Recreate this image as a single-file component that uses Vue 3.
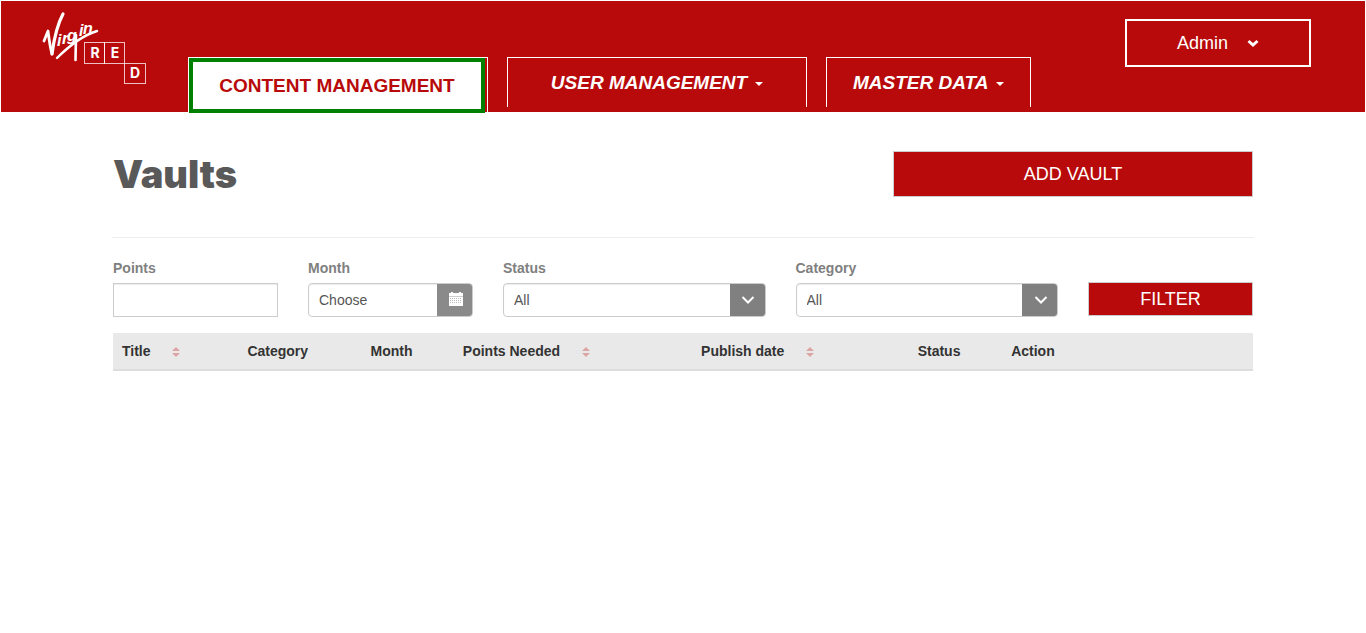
<script setup>
import { ref } from 'vue'

const points = ref('')
const month = ref('')
const status = ref('All')
const category = ref('All')

const columns = [
  { key: 'title', label: 'Title', sortable: true },
  { key: 'category', label: 'Category' },
  { key: 'month', label: 'Month' },
  { key: 'points', label: 'Points Needed', sortable: true },
  { key: 'publish', label: 'Publish date', sortable: true },
  { key: 'status', label: 'Status' },
  { key: 'action', label: 'Action' },
]
</script>

<template>
  <div class="page">
    <header class="header">
      <a class="brand" href="#" aria-label="Virgin Red">
        <svg class="logo" viewBox="0 0 106 76" width="106" height="76">
          <g fill="none" stroke="#fff" stroke-linecap="round" stroke-linejoin="round">
            <path d="M3 30L7 20C8 28 9 36 11 43" stroke-width="2.800" />
            <path d="M11 43C13 28 16 14 22 3" stroke-width="3.200" />
            <path d="M16 47C27 36 40 25 56 20" stroke-width="2.400" />
            <path d="M35 24L34.500 49" stroke-width="2.600" />
          </g>
          <text class="script" x="16 21 26 38 42" y="35 33 30 25 23">irgin</text>
          <g fill="none" stroke="#fff" stroke-opacity=".75">
            <rect x="43.500" y="31.500" width="20" height="21" />
            <rect x="63.500" y="31.500" width="20" height="21" />
            <rect x="83.500" y="52.500" width="21" height="20" />
          </g>
          <g class="caps">
            <text x="54" y="47">R</text>
            <text x="74" y="47">E</text>
            <text x="94" y="67">D</text>
          </g>
        </svg>
      </a>
      <nav class="tabs">
        <div class="tab tab-active"><a href="#">CONTENT MANAGEMENT</a></div>
        <div class="tab tab-wide"><a href="#">USER MANAGEMENT<span class="caret"></span></a></div>
        <div class="tab"><a href="#">MASTER DATA<span class="caret"></span></a></div>
      </nav>
      <button class="account" type="button">
        Admin
        <svg viewBox="0 0 12 8" width="12" height="8">
          <path d="M1.500 2L6 6L10.500 2" fill="none" stroke="#fff" stroke-width="3" />
        </svg>
      </button>
    </header>

    <main class="content">
      <div class="heading">
        <h1>Vaults</h1>
        <button class="action" type="button">ADD VAULT</button>
      </div>

      <form class="filters" @submit.prevent>
        <div class="field">
          <label for="points">Points</label>
          <input id="points" v-model="points" class="control square" type="text" />
        </div>
        <div class="field">
          <label for="month">Month</label>
          <div class="group">
            <input id="month" v-model="month" class="control" type="text" placeholder="Choose" />
            <button class="addon addon-date" type="button" aria-label="Open calendar">
              <svg viewBox="0 0 14 16" width="14" height="16">
                <path d="M0 1h14v3H0zM2 0h2v1H2zM10 0h2v1h-2z" fill="#fff" />
                <path d="M0 4h14v1H0z" fill="#ccc" />
                <path d="M0 5h14v9H0z" fill="#fff" />
                <path d="M1 6.500h12M1 8.500h12M1 10.500h12" stroke="#bbb" stroke-dasharray="1 1" />
              </svg>
            </button>
          </div>
        </div>
        <div class="field wide">
          <label for="status">Status</label>
          <div class="group">
            <select id="status" v-model="status" class="control"><option>All</option></select>
            <span class="addon">
              <svg viewBox="0 0 14 10" width="14" height="10">
                <path d="M1.500 2L7 7.500L12.500 2" fill="none" stroke="#fff" stroke-width="2" />
              </svg>
            </span>
          </div>
        </div>
        <div class="field wide">
          <label for="category">Category</label>
          <div class="group">
            <select id="category" v-model="category" class="control"><option>All</option></select>
            <span class="addon">
              <svg viewBox="0 0 14 10" width="14" height="10">
                <path d="M1.500 2L7 7.500L12.500 2" fill="none" stroke="#fff" stroke-width="2" />
              </svg>
            </span>
          </div>
        </div>
        <button class="action filter" type="submit">FILTER</button>
      </form>

      <table class="vaults">
        <colgroup>
          <col v-for="column in columns" :key="column.key" :class="'col-' + column.key" />
        </colgroup>
        <thead>
          <tr>
            <th v-for="column in columns" :key="column.key" scope="col">
              {{ column.label }}
              <svg v-if="column.sortable" class="sort" viewBox="0 0 8 10" width="8" height="10">
                <path d="M4 0L8 4H0zM0 6H8L4 10z" fill="#dea3a3" />
              </svg>
            </th>
          </tr>
        </thead>
      </table>
    </main>
  </div>
</template>

<style>
body {
  margin: 0;
  background: #fff;
}
</style>

<style scoped>
.page {
  padding: 1px 1px 0;
  font-family: "Liberation Sans", Arial, sans-serif;
  font-size: 14px;
  line-height: 20px;
  color: #333;
}
.page *,
.page *::before {
  box-sizing: border-box;
}
button,
input,
select {
  margin: 0;
  font-family: inherit;
}
button {
  cursor: pointer;
}
svg {
  display: block;
}
.header {
  display: flex;
  align-items: flex-start;
  height: 111px;
  padding: 0 54px 0 40px;
  background: #b80a0a;
}
.brand {
  margin-top: 10px;
}
.script {
  fill: #fff;
  font: italic bold 16px "Liberation Sans", Arial, sans-serif;
}
.caps {
  fill: #fff;
  font: bold 14px Inter, sans-serif;
  text-anchor: middle;
}
.tabs {
  display: flex;
  gap: 19px;
  margin: 56px auto 0 41px;
}
.tab {
  height: 50px;
  border: 1px solid #fff;
  border-bottom: 0;
}
.tab a {
  display: flex;
  align-items: center;
  justify-content: center;
  height: 100%;
  padding: 0 26px;
  color: #fff;
  font-size: 19px;
  font-weight: bold;
  font-style: italic;
  text-decoration: none;
  white-space: nowrap;
}
.tab-wide,
.tab-active {
  width: 300px;
}
.tab-active {
  height: 55px;
  padding-right: 2px;
}
.tab.tab-active a {
  height: 55px;
  border: 4px solid #008000;
  background: #fff;
  color: #b80a0a;
  font-style: normal;
}
.caret {
  margin: 2px 0 0 8px;
  border: 4px solid transparent;
  border-top-color: #fff;
  border-bottom: 0;
}
.account {
  display: flex;
  align-items: center;
  justify-content: center;
  gap: 19px;
  width: 186px;
  height: 48px;
  margin-top: 18px;
  border: 2px solid #fff;
  background: transparent;
  color: #fff;
  font-size: 18px;
}
.content {
  max-width: 1140px;
  margin: 0 auto;
}
.heading {
  display: flex;
  justify-content: space-between;
  align-items: flex-start;
  height: 126px;
  margin: 0 -1px;
  padding: 39px 1px 0;
  border-bottom: 1px solid #eee;
}
h1 {
  margin: 0;
  color: #595959;
  font: 900 38px/46px "Arial Black", Inter, sans-serif;
}
.action {
  width: 360px;
  height: 46px;
  padding: 0;
  border: 1px solid #ccc;
  background: #b80a0a;
  color: #fff;
  font-size: 18px;
}
.filters {
  display: grid;
  grid-template-columns: repeat(12, 1fr);
  gap: 30px;
  padding: 20px 0 16px;
}
.field {
  grid-column: span 2;
}
.wide {
  grid-column: span 3;
}
.field label {
  display: block;
  margin-bottom: 5px;
  color: #808080;
  font-weight: bold;
}
.control {
  display: block;
  width: 100%;
  height: 34px;
  padding: 0 10px;
  border: 1px solid #ccc;
  border-radius: 4px;
  background: #fff;
  box-shadow: inset 0 1px 1px rgba(0, 0, 0, 0.08);
  color: #555;
  font-size: 14px;
  appearance: none;
}
.control::placeholder {
  color: #555;
  opacity: 1;
}
.square {
  border-radius: 0;
}
.group {
  position: relative;
}
.addon {
  position: absolute;
  top: 1px;
  right: 1px;
  bottom: 1px;
  display: flex;
  align-items: center;
  justify-content: center;
  width: 35px;
  padding: 0 0 0 2px;
  border: 0;
  border-radius: 0 3px 3px 0;
  background: #808080;
  pointer-events: none;
}
.addon-date {
  background: #8a8a8a;
  pointer-events: auto;
}
.filter {
  grid-column: span 2;
  width: 100%;
  height: 34px;
  margin-top: 24px;
}
.vaults {
  width: 100%;
  border-collapse: separate;
  border-spacing: 0;
  table-layout: fixed;
}
.vaults th {
  height: 38px;
  padding: 0 9px;
  border-bottom: 2px solid #ddd;
  background: #e9e9e9;
  text-align: left;
  white-space: nowrap;
}
.sort {
  display: inline-block;
  margin-left: 18px;
  vertical-align: -1px;
}
.col-title {
  width: 11%;
}
.col-category {
  width: 10.8%;
}
.col-month {
  width: 8.1%;
}
.col-points {
  width: 20.9%;
}
.col-publish {
  width: 19%;
}
.col-status {
  width: 8.2%;
}
</style>
